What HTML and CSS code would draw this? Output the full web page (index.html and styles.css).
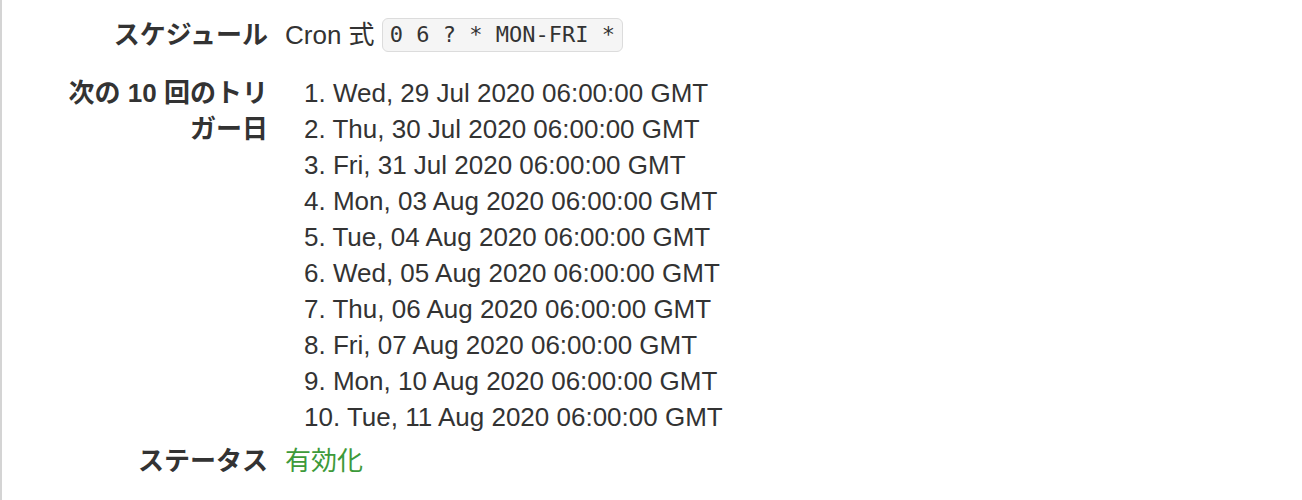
FILE: index.html
```html
<!DOCTYPE html>
<html lang="ja">
<head>
    <meta charset="UTF-8">
    <meta name="viewport" content="width=device-width, initial-scale=1.0">
    <title>スケジュール詳細</title>
    <link rel="stylesheet" href="styles.css">
</head>
<body>
    <div class="panel">
        <dl class="details">
            <div class="row row-schedule">
                <dt>スケジュール</dt>
                <dd class="inline-value">Cron 式 <code class="cron">0 6 ? * MON-FRI *</code></dd>
            </div>
            <div class="row row-triggers">
                <dt>次の <span class="num">10</span> 回のトリガー日</dt>
                <dd>
                    <ul class="dates">
                        <li>1. Wed, 29 Jul 2020 06:00:00 GMT</li>
                        <li>2. Thu, 30 Jul 2020 06:00:00 GMT</li>
                        <li>3. Fri, 31 Jul 2020 06:00:00 GMT</li>
                        <li>4. Mon, 03 Aug 2020 06:00:00 GMT</li>
                        <li>5. Tue, 04 Aug 2020 06:00:00 GMT</li>
                        <li>6. Wed, 05 Aug 2020 06:00:00 GMT</li>
                        <li>7. Thu, 06 Aug 2020 06:00:00 GMT</li>
                        <li>8. Fri, 07 Aug 2020 06:00:00 GMT</li>
                        <li>9. Mon, 10 Aug 2020 06:00:00 GMT</li>
                        <li>10. Tue, 11 Aug 2020 06:00:00 GMT</li>
                    </ul>
                </dd>
            </div>
            <div class="row row-status">
                <dt>ステータス</dt>
                <dd><span class="status-on">有効化</span></dd>
            </div>
        </dl>
    </div>
</body>
</html>
```

FILE: styles.css
```css
body { margin: 0; background: #fff; color: #333; font-family: 'Liberation Sans', 'Noto Sans CJK JP', sans-serif; font-size: 26px; line-height: 36px; }
.panel { border-left: 2px solid #d4d4d4; min-height: 500px; padding: 17px 0 0 62px; box-sizing: border-box; }
.details { margin: 0; }
.row { display: grid; grid-template-columns: 204px 1fr; column-gap: 17px; }
.row dt { text-align: right; font-weight: bold; color: #333; }
.row dd { margin: 0; }
.row-schedule { height: 36px; margin-bottom: 22px; }
.inline-value { display: flex; align-items: center; white-space: pre; }
.cron { font-family: 'DejaVu Sans Mono', 'Liberation Mono', monospace; font-size: 22px; line-height: 26px; padding: 3px 7px; background: #f5f5f5; border: 1px solid #dcdcdc; border-radius: 6px; color: #333; }
.row-triggers { margin-bottom: 8px; }
.dates { list-style: none; margin: 0; padding: 0 0 0 19px; }
.status-on { color: #3d9a3a; }
```
